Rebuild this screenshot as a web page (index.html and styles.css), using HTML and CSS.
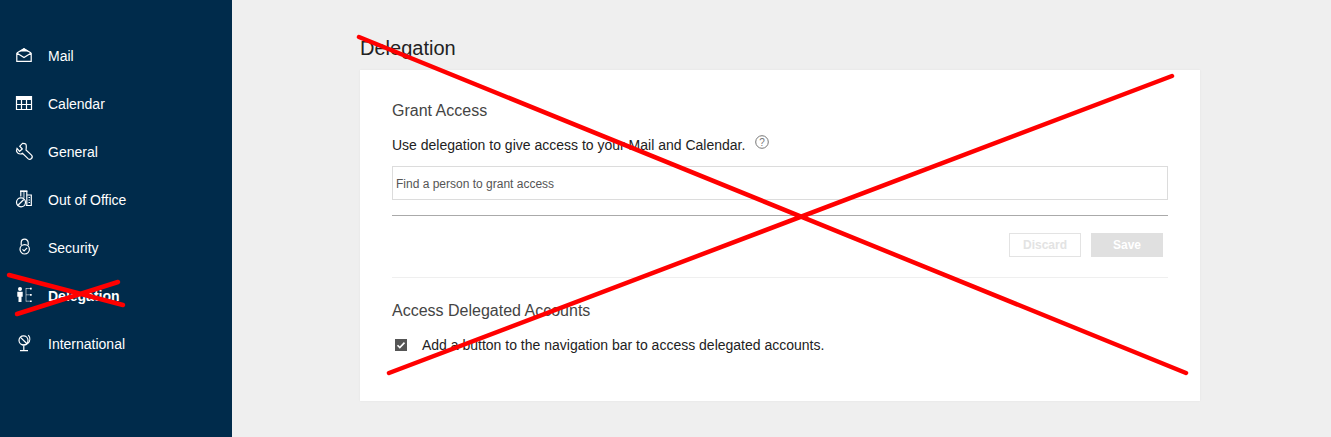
FILE: index.html
```html
<!DOCTYPE html>
<html lang="en">
<head>
  <meta charset="UTF-8">
  <title>Delegation</title>
  <link rel="stylesheet" href="styles.css">
</head>
<body>
  <div class="app">
    <nav class="sidebar">
      <a class="nav-item">
        <svg class="nav-icon" viewBox="0 0 16 16"><path class="fill" d="M3 3.500 8 .3l5 3.200z"/><path d="M.8 5v8.400h14.400V5M.8 5 8 .8 15.200 5M.8 5 8 9.500 15.200 5"/></svg>
        Mail
      </a>
      <a class="nav-item">
        <svg class="nav-icon" viewBox="0 0 16 16"><path class="fill" d="M0 0h16v4H0z"/><path d="M.5 .5h15v13h-15zM.5 8.500h15M5.500 4v9.500M10.500 4v9.500"/></svg>
        Calendar
      </a>
      <a class="nav-item">
        <svg class="nav-icon" viewBox="0 0 16 16"><path d="M6.500-.6 3.800 2.200 6.300 5 3.600 7.300 1 4.400C-.2 7.200 1.300 10 4.200 10c.9 0 1.700-.2 2.300-.7l5.500 5.300c1 .9 2.500.9 3.500-.1.900-1 .9-2.400 0-3.400L10 6C11-.8 9.500-.6 6.500-.6z"/></svg>
        General
      </a>
      <a class="nav-item">
        <svg class="nav-icon" viewBox="0 0 16 16"><path class="fill" d="M4 -1.300h7.300V0H4z"/><path d="M4.800 4.500V-1h6v14.500H9.800M10.800 3h4.500v10.500h-4.500M6.800 1h2M6.800 3h2M6.800 5h2M12.500 5.500h1.500M12.500 8h1.500M12.500 10.500h1.500"/><circle cx="5" cy="10.300" r="4.500"/><path d="m2.200 13 5.600-5.500"/></svg>
        Out of Office
      </a>
      <a class="nav-item">
        <svg class="nav-icon" viewBox="0 0 16 16"><path d="M5.200 5.300V2.700a3.500 3.500 0 0 1 7 0v2.600"/><circle cx="8.700" cy="9.300" r="4.700"/><path d="m6.500 9.300 1.600 1.600 3-3"/></svg>
        Security
      </a>
      <a class="nav-item is-active">
        <svg class="nav-icon" viewBox="0 0 16 16"><circle class="fill" cx="4" cy="1" r="2"/><path class="fill" d="M1.300 3.800h5.400v5H5.500V14H2.500V8.800H1.300z"/><path class="dim" d="M10 0v13.500M10 .5h4M10 6.800h4M10 13.200h4"/><path class="fill" d="M14-.3h1.700v1.700H14zM14 6h1.700v1.700H14zM14 12.400h1.700v1.700H14z"/></svg>
        Delegation
      </a>
      <a class="nav-item">
        <svg class="nav-icon" viewBox="0 0 16 16"><circle cx="7.500" cy="4.300" r="4.500"/><path d="M4.300 1.100l6.400 6.400M12.300-.8c2 2.300 2 5.700-.2 8-2 2-5 2.400-7.200 1M7.800 10v4.500M4 14.700h8"/></svg>
        International
      </a>
    </nav>

    <main class="content">
      <h1 class="page-title">Delegation</h1>
      <section class="card">
        <h2 class="section-title">Grant Access</h2>
        <p class="hint">
          Use delegation to give access to your Mail and Calendar.
          <svg class="help-icon" viewBox="0 0 14 14"><circle cx="7" cy="7" r="6.300"/><text x="7" y="10.500" text-anchor="middle">?</text></svg>
        </p>
        <input class="search" type="text" placeholder="Find a person to grant access">
        <hr class="rule">
        <div class="actions">
          <button class="btn btn-outline">Discard</button>
          <button class="btn btn-solid">Save</button>
        </div>
        <hr class="divider">
        <h2 class="section-title">Access Delegated Accounts</h2>
        <label class="check-row">
          <span class="check">
            <svg viewBox="0 0 12 12"><path d="m2.500 6.300 2.300 2.300 4.700-5"/></svg>
          </span>
          Add a button to the navigation bar to access delegated accounts.
        </label>
      </section>
    </main>
  </div>

  <!-- red crosses drawn over the page -->
  <svg class="marks" viewBox="0 0 1331 437">
    <path d="M359 37 1186 373M389 373 1172 76"/>
    <path d="M9 275 123 305M17 314 118 282"/>
  </svg>
</body>
</html>
```

FILE: styles.css
```css
* { box-sizing: border-box; }
html, body { margin: 0; padding: 0; }

body {
  background: #efefef;
  font-family: "Liberation Sans", Arial, sans-serif;
  color: #222;
  height: 437px;
  overflow: hidden;
}

.app {
  display: flex;
  height: 437px;
}

/* Sidebar */
.sidebar {
  width: 232px;
  flex: none;
  background: #002b4b;
  padding-top: 32px;
}

.nav-item {
  display: flex;
  align-items: center;
  gap: 16px;
  height: 48px;
  padding-left: 16px;
  font-size: 14px;
  color: #fff;
}

.nav-item.is-active { font-weight: 700; }

.nav-icon {
  width: 16px;
  height: 16px;
  flex: none;
  fill: none;
  stroke: #fff;
  stroke-width: 1.2;
  overflow: visible;
}

.nav-icon .fill { fill: #fff; stroke: none; }
.nav-icon .dim { stroke-width: 1; stroke-opacity: .55; }

/* Main area */
.content {
  padding: 37px 0 0 128px;
}

.page-title {
  margin: 0 0 11px;
  font-size: 20px;
  line-height: 22px;
  font-weight: 400;
  color: #222;
}

.card {
  width: 840px;
  height: 331px;
  background: #fff;
  padding: 32px 32px 0;
  box-shadow: 0 0 2px rgba(0,0,0,.06);
}

.section-title {
  margin: 0;
  font-size: 16px;
  line-height: 18px;
  font-weight: 400;
  color: #444;
}

.hint {
  display: flex;
  align-items: flex-start;
  margin: 16px 0 12px;
  font-size: 14px;
  line-height: 18px;
  color: #222;
}

.help-icon {
  width: 14px;
  height: 14px;
  margin: -1px 0 0 10px;
  fill: none;
  stroke: #777;
  stroke-width: 1;
}

.help-icon text {
  fill: #777;
  stroke: none;
  font-size: 10px;
  font-family: "Liberation Sans", Arial, sans-serif;
}

.search {
  display: block;
  width: 100%;
  height: 34px;
  border: 1px solid #dcdcdc;
  padding: 2px 3px 0;
  font-family: inherit;
  font-size: 12px;
  outline: none;
}

.search::placeholder { color: #555; opacity: 1; }

.rule {
  margin: 15px 0 0;
  border: 0;
  border-top: 1px solid #aaa;
}

.actions {
  display: flex;
  justify-content: flex-end;
  gap: 10px;
  padding: 17px 5px 0 0;
}

.btn {
  width: 72px;
  height: 24px;
  padding: 0;
  font-family: inherit;
  font-size: 12px;
  font-weight: 700;
}

.btn-outline {
  background: #fff;
  border: 1px solid #e3e3e3;
  color: #e3e3e3;
}

.btn-solid {
  background: #e0e0e0;
  border: 0;
  color: #fff;
}

.divider {
  margin: 20px 0 24px;
  border: 0;
  border-top: 1px solid #efefef;
}

.check-row {
  display: flex;
  align-items: center;
  margin-top: 16px;
  padding-left: 3px;
  font-size: 14px;
  line-height: 18px;
  color: #222;
}

.check {
  width: 12px;
  height: 12px;
  flex: none;
  margin-right: 15px;
  background: #555;
}

.check svg {
  display: block;
  fill: none;
  stroke: #fff;
  stroke-width: 1.6;
}

/* Overlay marks */
.marks {
  position: absolute;
  left: 0;
  top: 0;
  width: 1331px;
  height: 437px;
  pointer-events: none;
  fill: none;
  stroke: #f00;
  stroke-width: 4.5;
  stroke-linecap: round;
}
```
